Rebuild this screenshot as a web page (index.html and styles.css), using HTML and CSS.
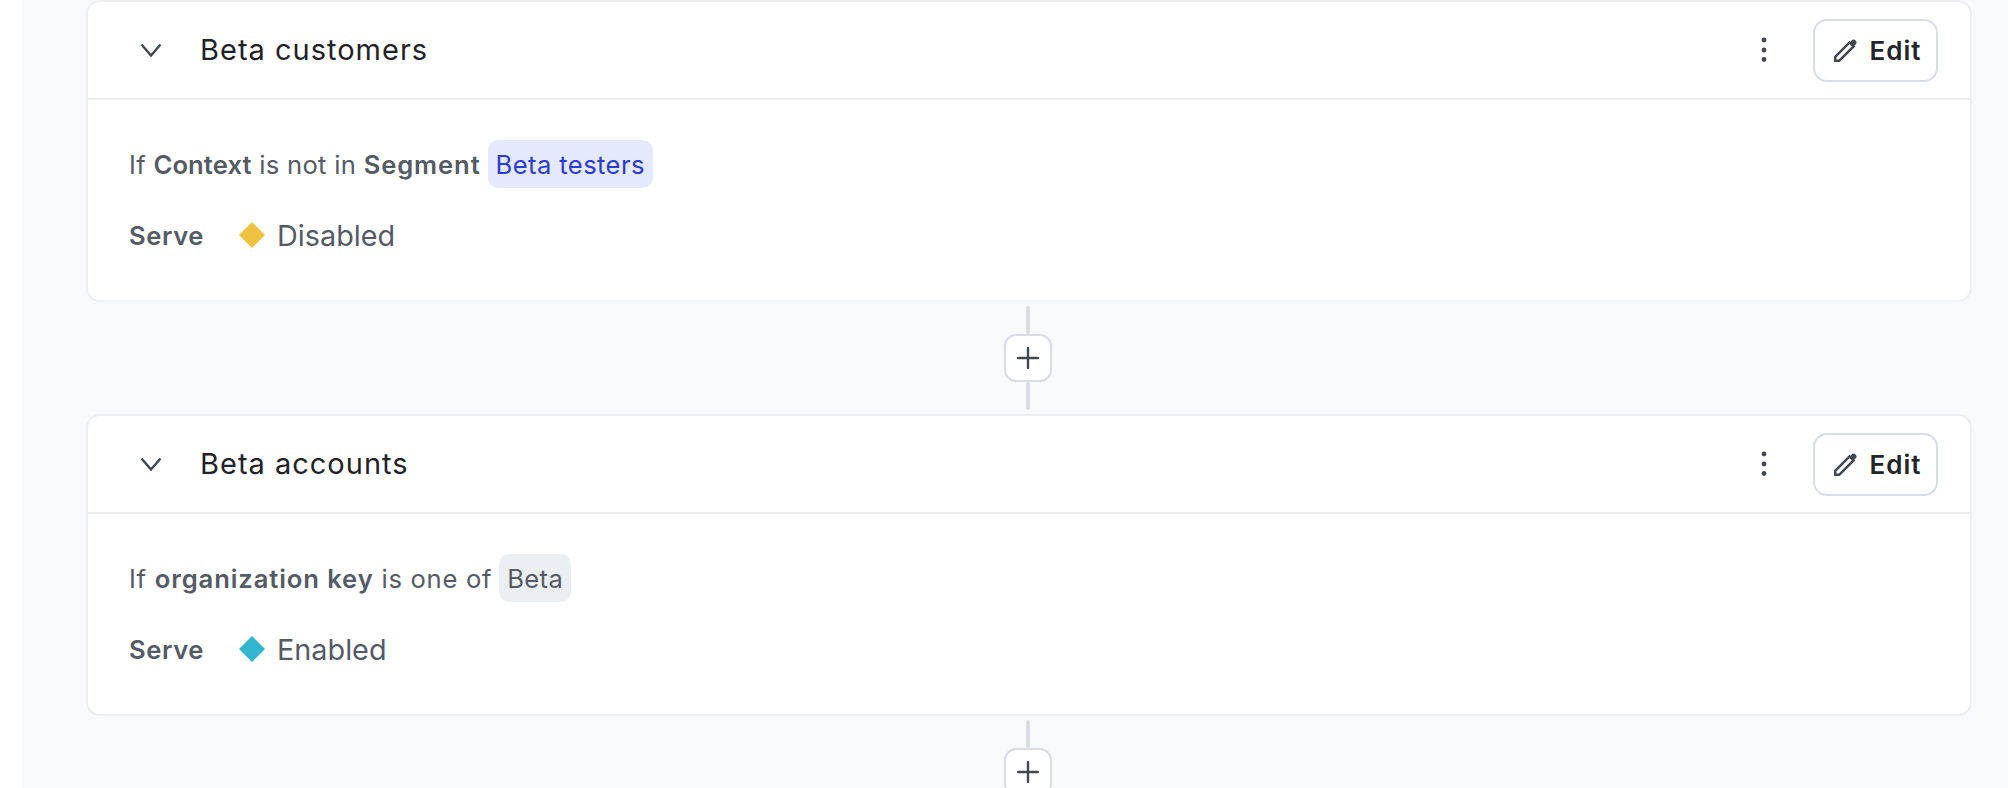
FILE: index.html
```html
<!DOCTYPE html>
<html>
<head>
  <meta charset="utf-8">
  <title>Rules</title>
  <link rel="stylesheet" href="styles.css">
</head>
<body>
  <div class="page">

    <div class="card">
      <div class="card-head">
        <svg class="chevron" viewBox="0 0 22 14"><path d="M1.5 1.500 11 12.500l9.500-11"/></svg>
        <div class="card-title">Beta customers</div>
        <svg class="kebab" viewBox="0 0 6 26"><circle cx="3" cy="3" r="2.4"/><circle cx="3" cy="13" r="2.4"/><circle cx="3" cy="22.500" r="2.4"/></svg>
        <button class="edit-btn">
          <svg class="pencil" viewBox="2 2 20 20"><path class="pencil-body" d="M3 17.500 15.500 5l3.500 3.500L6.500 21H3z"/><path class="pencil-tip" d="M15.500 5 17.500 3a2.500 2.500 0 0 1 3.500 3.500l-2 2z"/></svg>
          Edit
        </button>
      </div>
      <div class="card-body">
        <div class="rule">
          <span>If <b class="tight">Context</b> is not in <b>Segment</b></span>
          <span class="chip chip-blue">Beta testers</span>
        </div>
        <div class="serve">
          <span class="serve-label">Serve</span>
          <svg class="diamond" viewBox="0 0 26 26"><path class="yellow" d="M13 0 26 13 13 26 0 13z"/></svg>
          <span class="serve-value">Disabled</span>
        </div>
      </div>
    </div>

    <div class="connector">
      <div class="line"></div>
      <button class="add-btn"><svg viewBox="0 0 22 22"><path d="M11 1v20M1 11h20"/></svg></button>
      <div class="line"></div>
    </div>

    <div class="card">
      <div class="card-head">
        <svg class="chevron" viewBox="0 0 22 14"><path d="M1.5 1.500 11 12.500l9.500-11"/></svg>
        <div class="card-title">Beta accounts</div>
        <svg class="kebab" viewBox="0 0 6 26"><circle cx="3" cy="3" r="2.4"/><circle cx="3" cy="13" r="2.4"/><circle cx="3" cy="22.500" r="2.4"/></svg>
        <button class="edit-btn">
          <svg class="pencil" viewBox="2 2 20 20"><path class="pencil-body" d="M3 17.500 15.500 5l3.500 3.500L6.500 21H3z"/><path class="pencil-tip" d="M15.500 5 17.500 3a2.500 2.500 0 0 1 3.500 3.500l-2 2z"/></svg>
          Edit
        </button>
      </div>
      <div class="card-body">
        <div class="rule rule-wide">
          <span>If <b>organization key</b> is one of</span>
          <span class="chip chip-gray">Beta</span>
        </div>
        <div class="serve">
          <span class="serve-label">Serve</span>
          <svg class="diamond" viewBox="0 0 26 26"><path class="teal" d="M13 0 26 13 13 26 0 13z"/></svg>
          <span class="serve-value">Enabled</span>
        </div>
      </div>
    </div>

    <div class="connector">
      <div class="line"></div>
      <button class="add-btn"><svg viewBox="0 0 22 22"><path d="M11 1v20M1 11h20"/></svg></button>
      <div class="line"></div>
    </div>

  </div>
</body>
</html>
```

FILE: styles.css
```css
html, body {
  margin: 0;
  height: 100%;
  overflow: hidden;
  background: #fff;
}

body {
  font-family: Inter, "Liberation Sans", sans-serif;
  color: #545b66;
}

.page {
  margin-left: 22px;
  height: 788px;
  overflow: hidden;
  padding: 0 36px 0 64px;
  background: #f8f9fb;
}

.card {
  height: 302px;
  box-sizing: border-box;
  background: #fff;
  border: 2px solid #eceef1;
  border-radius: 14px;
}

.card-head {
  height: 96px;
  display: flex;
  align-items: center;
  padding: 0 32px 0 52px;
  border-bottom: 2px solid #eceef1;
}

.chevron {
  width: 22px;
  height: 14px;
  fill: none;
  stroke: #414852;
  stroke-width: 2.4;
}

.card-title {
  flex: 1;
  margin: 0 0 2px 38px;
  font-size: 29px;
  letter-spacing: 1px;
  color: #1f2228;
}

.kebab {
  width: 6px;
  height: 26px;
  margin-right: 46px;
  fill: #414852;
}

.edit-btn {
  width: 125px;
  height: 63px;
  display: flex;
  align-items: center;
  justify-content: center;
  gap: 13px;
  padding: 0 0 0 4px;
  background: #fff;
  border: 2px solid #d9dde3;
  border-radius: 14px;
  font-family: inherit;
  font-size: 26px;
  font-weight: 600;
  letter-spacing: 1px;
  color: #22252b;
}

.pencil {
  width: 23px;
  height: 23px;
}

.pencil-body {
  fill: none;
  stroke: #414852;
  stroke-width: 2.2;
}

.pencil-tip {
  fill: #414852;
}

.card-body {
  padding: 40px 0 0 41px;
}

.rule {
  display: flex;
  align-items: center;
  gap: 7px;
  height: 48px;
  font-size: 25.6px;
  letter-spacing: 0.3px;
}

.rule b {
  font-weight: 600;
  letter-spacing: 0.9px;
}

.rule b.tight {
  letter-spacing: 0.1px;
}

.rule-wide {
  letter-spacing: 0.7px;
}

.chip {
  display: flex;
  align-items: center;
  height: 48px;
  padding: 0 8px;
  border-radius: 10px;
  letter-spacing: 0.4px;
}

.chip-blue {
  background: #e4e9fd;
  color: #2b3bd6;
}

.chip-gray {
  background: #eceff1;
}

.serve {
  display: flex;
  align-items: center;
  margin-top: 23px;
  height: 48px;
}

.serve-label {
  width: 110px;
  font-size: 25.6px;
  font-weight: 600;
  letter-spacing: 0.6px;
}

.diamond {
  width: 26px;
  height: 26px;
  margin-right: 12px;
}

.yellow {
  fill: #efc23f;
}

.teal {
  fill: #33b5d0;
}

.serve-value {
  font-size: 28.8px;
}

.connector {
  height: 112px;
  box-sizing: border-box;
  display: flex;
  flex-direction: column;
  align-items: center;
  padding: 4px 2px 0 0;
}

.line {
  width: 4px;
  height: 28px;
  background: #d9dde3;
  border-radius: 2px;
}

.add-btn {
  width: 48px;
  height: 48px;
  display: flex;
  align-items: center;
  justify-content: center;
  flex-shrink: 0;
  padding: 0;
  background: #fff;
  border: 2px solid #d9dde3;
  border-radius: 12px;
}

.add-btn svg {
  width: 22px;
  height: 22px;
  fill: none;
  stroke: #414852;
  stroke-width: 2.4;
  stroke-linecap: round;
}
```
